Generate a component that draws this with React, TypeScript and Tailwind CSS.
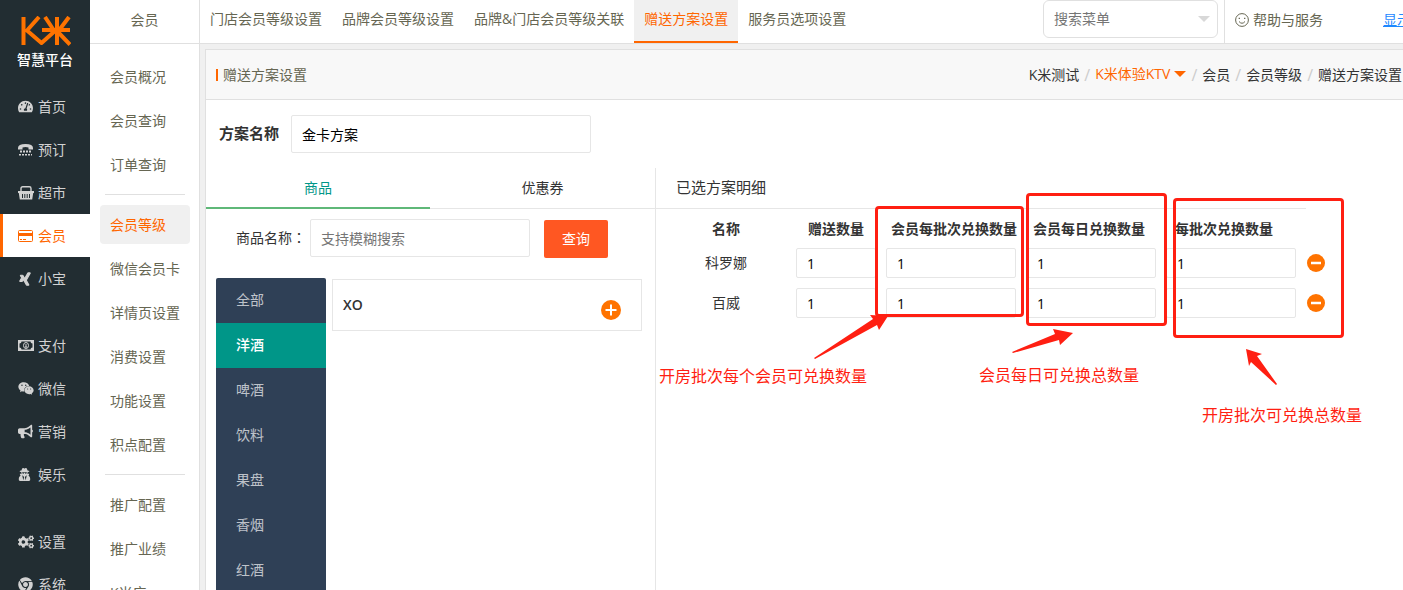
import { useState } from "react";
import type { ReactNode } from "react";
import {
  FaTachometerAlt,
  FaXing,
  FaWeixin,
  FaBullhorn,
  FaUserSecret,
  FaCogs,
  FaChrome,
} from "react-icons/fa";

interface MenuItem {
  name: string;
  icon: ReactNode;
}

const PhoneIcon = () => (
  <svg viewBox="0 0 15 12" width="15" height="12" fill="currentColor">
    <path d="M0 5.500V4Q0 0 7.500 0T15 4V5.500H10.500V3.500Q7.500 2.500 4.500 3.500V5.500Z" />
    <path d="M2 7.500H13" stroke="currentColor" strokeWidth="2" strokeDasharray="2 1" />
    <path d="M1 10.800H14" stroke="currentColor" strokeWidth="1.600" strokeDasharray="2 1" />
  </svg>
);

const BasketIcon = () => (
  <svg viewBox="0 0 16 14" width="16" height="14" fill="none" stroke="currentColor">
    <path d="M3 5.500V2.500Q3 .8 4.700.8H11.300Q13 .8 13 2.500V5.500" strokeWidth="1.4" />
    <path d="M0 5H16V7H15.200L14.200 13.500H1.800L.8 7H0Z" fill="currentColor" stroke="none" />
    <path d="M4.500 8V12M6.800 8V12M9.200 8V12M11.500 8V12" stroke="#222d32" strokeWidth="1" />
  </svg>
);

const CardIcon = () => (
  <svg viewBox="0 0 15 12" width="15" height="12" fill="none" stroke="currentColor">
    <rect x=".5" y=".5" width="14" height="11" rx="1" />
    <path d="M0 4.500H15" strokeWidth="3" />
    <path d="M2 9.500H4M5 9.500H8" />
  </svg>
);

const MoneyIcon = () => (
  <svg viewBox="0 0 16 11" width="16" height="11" fill="none" stroke="currentColor">
    <path d="M0 0H16V11H0Z M3.500 1.500Q3.500 3.500 1.500 3.500V7.500Q3.500 7.500 3.500 9.500H12.500Q12.500 7.500 14.500 7.500V3.500Q12.500 3.500 12.500 1.500Z" fill="currentColor" fillRule="evenodd" stroke="none" />
    <ellipse cx="8" cy="5.500" rx="2.500" ry="3" />
    <path d="M8 4V7.200M7 7H9" />
  </svg>
);

const menuGroups: MenuItem[][] = [
  [
    { name: "首页", icon: <FaTachometerAlt size={15} /> },
    { name: "预订", icon: <PhoneIcon /> },
    { name: "超市", icon: <BasketIcon /> },
    { name: "会员", icon: <CardIcon /> },
    { name: "小宝", icon: <FaXing size={14} strokeWidth={40} stroke="currentColor" /> },
  ],
  [
    { name: "支付", icon: <MoneyIcon /> },
    { name: "微信", icon: <FaWeixin size={17} /> },
    { name: "营销", icon: <FaBullhorn size={15} /> },
    { name: "娱乐", icon: <FaUserSecret size={13} /> },
  ],
  [
    { name: "设置", icon: <FaCogs size={16} /> },
    { name: "系统", icon: <FaChrome size={15} /> },
  ],
];

const subMenuGroups = [
  ["会员概况", "会员查询", "订单查询"],
  ["会员等级", "微信会员卡", "详情页设置", "消费设置", "功能设置", "积点配置"],
  ["推广配置", "推广业绩", "K米广"],
];

const topTabs = [
  "门店会员等级设置",
  "品牌会员等级设置",
  "品牌&门店会员等级关联",
  "赠送方案设置",
  "服务员选项设置",
];

const categories = ["全部", "洋酒", "啤酒", "饮料", "果盘", "香烟", "红酒"];

const columns = [
  { key: "gift", title: "赠送数量", cell: "w-[90px]", head: "text-center" },
  { key: "memberBatch", title: "会员每批次兑换数量", cell: "w-[140px]", head: "text-left pl-2.5" },
  { key: "memberDay", title: "会员每日兑换数量", cell: "w-[140px]", head: "text-left pl-3" },
  { key: "batch", title: "每批次兑换数量", cell: "w-[140px]", head: "text-left pl-3.5" },
];

function Logo() {
  return (
    <div className="flex flex-col items-center h-[85px] pt-4 text-white">
      <svg
        viewBox="0 0 52 30"
        width="52"
        height="30"
        fill="none"
        stroke="#ff7300"
        strokeWidth="4"
        strokeLinejoin="round"
      >
        <path d="M4.500 1V29M20 1 8 14.500 22.500 27 37 14" />
        <path d="M26 1 34 13M50 1 41 13M38 1V29M23 14H51M38 15 51 28.500" />
      </svg>
      <span className="text-sm font-medium leading-5 mt-1">智慧平台</span>
    </div>
  );
}

function SideMenu({ active }: { active: string }) {
  return (
    <nav className="w-[90px] shrink-0 bg-[#222d32] overflow-hidden">
      <Logo />
      <div className="flex flex-col gap-6">
        {menuGroups.map((group, i) => (
          <ul key={i}>
            {group.map((item) => (
              <li key={item.name}>
                <a
                  href="#"
                  className={`flex items-center h-[43px] border-l-3 pl-[15px] gap-1 ${
                    item.name === active
                      ? "bg-white border-[#ff6600] text-[#ff6600]"
                      : "border-transparent text-[#d2d2d2]"
                  }`}
                >
                  <span className="w-4 flex">{item.icon}</span>
                  {item.name}
                </a>
              </li>
            ))}
          </ul>
        ))}
      </div>
    </nav>
  );
}

function SubMenu({ active }: { active: string }) {
  return (
    <aside className="w-[110px] shrink-0 bg-white border-r border-[#e0e0e0] overflow-hidden text-[#666652]">
      <h2 className="h-11 border-b border-[#e0e0e0] text-center leading-10">会员</h2>
      <div className="pt-[13px] pl-2.5 pr-[9px]">
        {subMenuGroups.map((group, i) => (
          <div key={i}>
            {i > 0 && <hr className="my-2.5 mx-[5px] border-[#e0e0e0]" />}
            <ul className="flex flex-col gap-[5px]">
              {group.map((name) => (
                <li key={name}>
                  <a
                    href="#"
                    className={`block h-[39px] leading-[39px] px-2.5 rounded whitespace-nowrap ${
                      name === active ? "bg-[#f0f0f0] text-[#ff6600]" : ""
                    }`}
                  >
                    {name}
                  </a>
                </li>
              ))}
            </ul>
          </div>
        ))}
      </div>
    </aside>
  );
}

function TopBar({ active }: { active: string }) {
  return (
    <header className="flex h-11 shrink-0 bg-white border-b border-[#e0e0e0] text-[#666652] whitespace-nowrap overflow-hidden">
      <nav className="flex">
        {topTabs.map((tab) => (
          <a
            key={tab}
            href="#"
            className={`px-2.5 leading-[38px] border-b-2 ${
              tab === active ? "bg-[#f0f0f0] border-[#ff6600] text-[#ff6600]" : "border-transparent"
            }`}
          >
            {tab}
          </a>
        ))}
      </nav>
      <div className="flex ml-auto">
        <div className="relative mr-1.5">
          <select
            aria-label="搜索菜单"
            className="appearance-none w-[175px] h-[38px] px-2.5 border border-[#e0e0e0] rounded-md bg-white text-[#757575]"
          >
            <option>搜索菜单</option>
          </select>
          <svg className="absolute right-2 top-4 pointer-events-none" width="12" height="6" viewBox="0 0 12 6">
            <path d="M0 0H12L6 6Z" fill="#d8d8d8" />
          </svg>
        </div>
        <a href="#" className="flex items-center gap-1 border-l border-[#e0e0e0] pl-2.5 pb-1">
          <svg width="14" height="14" viewBox="0 0 14 14" fill="none" stroke="currentColor">
            <circle cx="7" cy="7" r="6.400" />
            <path d="M4 8.500Q7 12 10 8.500" />
            <path d="M4.300 4.800V6M9.700 4.800V6" strokeWidth="1.300" />
          </svg>
          帮助与服务
        </a>
        <a href="#" className="w-5 ml-[60px] overflow-hidden leading-10 underline text-[#1e88ff]">
          显示
        </a>
      </div>
    </header>
  );
}

function Breadcrumb() {
  const slash = <span className="text-base text-[#ccc]">/</span>;
  return (
    <nav className="flex items-center gap-[5px] text-[#333]">
      <a href="#">K米测试</a>
      {slash}
      <button className="flex items-center gap-1 pb-0.5 text-[#ff6600]">
        K米体验KTV
        <svg width="12" height="6" viewBox="0 0 12 6">
          <path d="M0 0H12L6 6Z" fill="currentColor" />
        </svg>
      </button>
      {slash}
      <a href="#">会员</a>
      {slash}
      <a href="#">会员等级</a>
      {slash}
      <span>赠送方案设置</span>
    </nav>
  );
}

function Goods() {
  const [category, setCategory] = useState("洋酒");

  return (
    <section className="w-[450px] shrink-0 border-r border-[#e6e6e6]">
      <div className="flex h-[41px] border-b border-[#e6e6e6]">
        <button className="w-[224px] h-[41px] border-b-2 border-[#5fb878] text-[#009688]">商品</button>
        <button className="flex-1">优惠券</button>
      </div>
      <div className="flex items-end h-[49px] pl-[30px]">
        <label htmlFor="goods" className="leading-10">
          商品名称<span className="font-['Noto_Sans_CJK_TC',sans-serif]">：</span>
        </label>
        <input
          id="goods"
          type="text"
          placeholder="支持模糊搜索"
          className="w-[220px] h-[38px] ml-1 mb-px px-2.5 border border-[#e6e6e6] rounded-xs placeholder:text-[#757575]"
        />
        <button className="w-16 h-[38px] ml-3.5 bg-[#ff5722] text-white rounded-xs">查询</button>
      </div>
      <div className="flex pl-2.5 pt-5 gap-1.5">
        <ul className="w-[110px] bg-[#2f4056] rounded-xs overflow-hidden">
          {categories.map((name) => (
            <li key={name}>
              <button
                onClick={() => setCategory(name)}
                className={`block w-full pl-5 text-left leading-[43px] pb-0.5 ${
                  name === category ? "bg-[#009688] text-white font-medium" : "text-white/70"
                }`}
              >
                {name}
              </button>
            </li>
          ))}
        </ul>
        <div className="flex justify-between w-[310px] h-[52px] mt-px pl-2.5 pr-5 border border-[#e6e6e6]">
          <span className="font-semibold leading-[50px]">XO</span>
          <button aria-label="添加" className="pt-2.5">
            <svg width="20" height="20" viewBox="0 0 20 20">
              <circle cx="10" cy="10" r="10" fill="#ff7300" />
              <path d="M10 4.500V15.500M4.500 10H15.500" stroke="#fff" strokeWidth="2" />
            </svg>
          </button>
        </div>
      </div>
    </section>
  );
}

// red marker boxes and arrows that explain the quantity columns
function Notes() {
  return (
    <div className="absolute inset-0 pointer-events-none text-base leading-6 text-[#ff1f12] whitespace-nowrap">
      <div className="absolute left-[219px] top-[38px] w-[149px] h-[111px] border-3 border-[#ff1f12] rounded" />
      <div className="absolute left-[370px] top-[25px] w-[141px] h-[133px] border-3 border-[#ff1f12] rounded" />
      <div className="absolute left-[517px] top-[30px] w-[171px] h-[140px] border-3 border-[#ff1f12] rounded" />
      <svg className="absolute left-0 top-0" width="700" height="230" viewBox="0 0 700 230" fill="#ff1f12">
        <path d="M158 190 217 151 214 147 232 148 223 162 221 157 159 191Z" />
        <path d="M356 184 399 166 397 161 417 165 404 177 403 172 357 185Z" />
        <path d="M620 217 595 194 593 198 590 181 606 186 601 188 621 216Z" />
      </svg>
      <p className="absolute left-[3px] top-[196px]">开房批次每个会员可兑换数量</p>
      <p className="absolute left-[323px] top-[195px]">会员每日可兑换总数量</p>
      <p className="absolute left-[546px] top-[235px]">开房批次可兑换总数量</p>
    </div>
  );
}

function Details() {
  const [rows, setRows] = useState(["科罗娜", "百威"]);

  return (
    <section className="relative flex-1 min-w-0">
      <h3 className="w-[650px] h-[41px] pl-5 border-b border-[#e6e6e6] text-[15px] leading-[39px]">已选方案明细</h3>
      <table className="table-fixed w-[670px] mt-1.5 ml-[5px]">
        <thead>
          <tr className="h-7">
            <th className="w-[130px] p-0">名称</th>
            {columns.map((col) => (
              <th key={col.key} className={`p-0 whitespace-nowrap ${col.cell} ${col.head}`}>
                {col.title}
              </th>
            ))}
            <th className="w-[30px] p-0" />
          </tr>
        </thead>
        <tbody>
          {rows.map((row) => (
            <tr key={row} className="h-10">
              <td className="p-0 text-center">{row}</td>
              {columns.map((col) => (
                <td key={col.key} className="px-[5px] py-0">
                  <input
                    type="text"
                    aria-label={`${row} ${col.title}`}
                    defaultValue="1"
                    className="block w-full h-[30px] px-2.5 border border-[#e6e6e6] rounded-xs text-black"
                  />
                </td>
              ))}
              <td className="p-0">
                <button
                  aria-label="删除"
                  className="block mx-auto"
                  onClick={() => setRows(rows.filter((r) => r !== row))}
                >
                  <svg width="18" height="18" viewBox="0 0 18 18">
                    <circle cx="9" cy="9" r="9" fill="#ff7300" />
                    <path d="M4 9H14" stroke="#fff" strokeWidth="2.500" />
                  </svg>
                </button>
              </td>
            </tr>
          ))}
        </tbody>
      </table>
      <Notes />
    </section>
  );
}

export default function App() {
  return (
    <div className="flex h-screen overflow-hidden bg-[#f0f0f0] text-sm text-[#333] font-['Open_Sans','Noto_Sans_CJK_SC',sans-serif]">
      <SideMenu active="会员" />
      <SubMenu active="会员等级" />
      <div className="flex flex-col flex-1 min-w-0">
        <TopBar active="赠送方案设置" />
        <main className="flex flex-col flex-1 mt-[5px] ml-[5px] border-t border-l border-[#e0e0e0] bg-white overflow-hidden">
          <div className="flex shrink-0 items-center justify-between h-[50px] pl-2.5 pr-px bg-[#f8f8f8] border-b border-[#e0e0e0] whitespace-nowrap">
            <h1 className="flex items-center gap-[5px] text-[#666652]">
              <span className="w-0.5 h-3 bg-[#ff6600]" />
              赠送方案设置
            </h1>
            <Breadcrumb />
          </div>
          <div className="flex shrink-0 items-center h-[68px] pl-[13px] gap-3">
            <label htmlFor="plan" className="text-[15px] font-bold">
              方案名称
            </label>
            <input
              id="plan"
              type="text"
              defaultValue="金卡方案"
              className="w-[300px] h-[38px] px-2.5 border border-[#e6e6e6] rounded-xs text-black"
            />
          </div>
          <div className="flex flex-1">
            <Goods />
            <Details />
          </div>
        </main>
      </div>
    </div>
  );
}
